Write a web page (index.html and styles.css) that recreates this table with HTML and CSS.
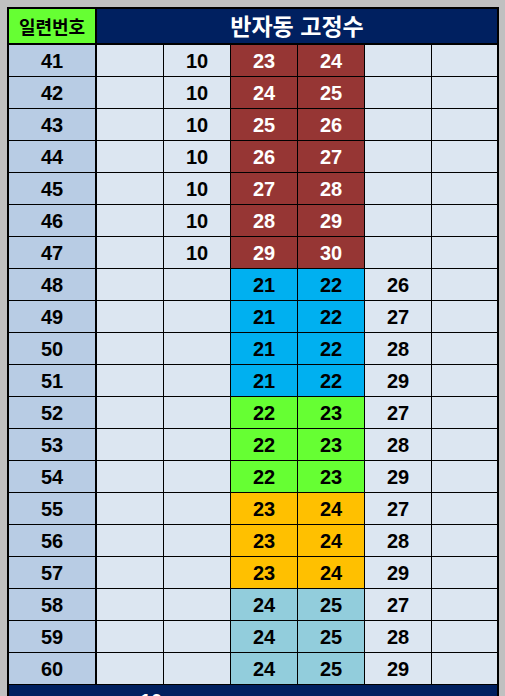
FILE: index.html
```html
<!DOCTYPE html>
<html lang="ko">
<head>
<meta charset="utf-8">
<link rel="stylesheet" href="styles.css">
</head>
<body>
<div class="sheet">
  <div class="c idh">일련번호</div>
  <div class="c title">반자동 고정수</div>

  <div class="c id">41</div><div class="c e"></div><div class="c e">10</div><div class="c m">23</div><div class="c m">24</div><div class="c e"></div><div class="c e"></div>
  <div class="c id">42</div><div class="c e"></div><div class="c e">10</div><div class="c m">24</div><div class="c m">25</div><div class="c e"></div><div class="c e"></div>
  <div class="c id">43</div><div class="c e"></div><div class="c e">10</div><div class="c m">25</div><div class="c m">26</div><div class="c e"></div><div class="c e"></div>
  <div class="c id">44</div><div class="c e"></div><div class="c e">10</div><div class="c m">26</div><div class="c m">27</div><div class="c e"></div><div class="c e"></div>
  <div class="c id">45</div><div class="c e"></div><div class="c e">10</div><div class="c m">27</div><div class="c m">28</div><div class="c e"></div><div class="c e"></div>
  <div class="c id">46</div><div class="c e"></div><div class="c e">10</div><div class="c m">28</div><div class="c m">29</div><div class="c e"></div><div class="c e"></div>
  <div class="c id">47</div><div class="c e"></div><div class="c e">10</div><div class="c m">29</div><div class="c m">30</div><div class="c e"></div><div class="c e"></div>

  <div class="c id">48</div><div class="c e"></div><div class="c e"></div><div class="c b">21</div><div class="c b">22</div><div class="c e">26</div><div class="c e"></div>
  <div class="c id">49</div><div class="c e"></div><div class="c e"></div><div class="c b">21</div><div class="c b">22</div><div class="c e">27</div><div class="c e"></div>
  <div class="c id">50</div><div class="c e"></div><div class="c e"></div><div class="c b">21</div><div class="c b">22</div><div class="c e">28</div><div class="c e"></div>
  <div class="c id">51</div><div class="c e"></div><div class="c e"></div><div class="c b">21</div><div class="c b">22</div><div class="c e">29</div><div class="c e"></div>

  <div class="c id">52</div><div class="c e"></div><div class="c e"></div><div class="c g">22</div><div class="c g">23</div><div class="c e">27</div><div class="c e"></div>
  <div class="c id">53</div><div class="c e"></div><div class="c e"></div><div class="c g">22</div><div class="c g">23</div><div class="c e">28</div><div class="c e"></div>
  <div class="c id">54</div><div class="c e"></div><div class="c e"></div><div class="c g">22</div><div class="c g">23</div><div class="c e">29</div><div class="c e"></div>

  <div class="c id">55</div><div class="c e"></div><div class="c e"></div><div class="c o">23</div><div class="c o">24</div><div class="c e">27</div><div class="c e"></div>
  <div class="c id">56</div><div class="c e"></div><div class="c e"></div><div class="c o">23</div><div class="c o">24</div><div class="c e">28</div><div class="c e"></div>
  <div class="c id">57</div><div class="c e"></div><div class="c e"></div><div class="c o">23</div><div class="c o">24</div><div class="c e">29</div><div class="c e"></div>

  <div class="c id">58</div><div class="c e"></div><div class="c e"></div><div class="c t">24</div><div class="c t">25</div><div class="c e">27</div><div class="c e"></div>
  <div class="c id">59</div><div class="c e"></div><div class="c e"></div><div class="c t">24</div><div class="c t">25</div><div class="c e">28</div><div class="c e"></div>
  <div class="c id">60</div><div class="c e"></div><div class="c e"></div><div class="c t">24</div><div class="c t">25</div><div class="c e">29</div><div class="c e"></div>

  <div class="c foot">10</div>
</div>
</body>
</html>
```

FILE: styles.css
```css
html, body {
  margin: 0;
  padding: 0;
  height: 696px;
  overflow: hidden;
  background: #c0c0c0;
}

.sheet {
  margin: 7px 0 0 7px;
  width: 488px;
  padding: 2px;
  background: #000;
  display: grid;
  grid-template-columns: 87px repeat(5, 66px) 65px;
  grid-template-rows: 35px repeat(20, 31px) 31px;
  gap: 1px;
  font-family: "Liberation Sans", "Noto Sans CJK KR", sans-serif;
  font-weight: 700;
  font-size: 20px;
  color: #000;
}

.c {
  display: flex;
  align-items: center;
  justify-content: center;
  box-sizing: border-box;
  line-height: 1;
}

.idh {
  background: #66ff33;
  font-family: "Noto Sans CJK KR", sans-serif;
  font-size: 18px;
  border-right: 1px solid #000;
  border-bottom: 1px solid #000;
  padding-bottom: 1px;
}

.title {
  grid-column: 2 / span 6;
  background: #002060;
  color: #fff;
  font-family: "Noto Sans CJK KR", sans-serif;
  font-size: 23px;
  border-bottom: 1px solid #000;
  padding-bottom: 1px;
}

.id {
  background: #b8cce4;
  border-right: 1px solid #000;
}

.e { background: #dce6f1; }
.m { background: #963634; color: #fff; }
.b { background: #00b0f0; }
.g { background: #66ff33; }
.o { background: #ffc000; }
.t { background: #92cddc; }

.foot {
  grid-column: 1 / span 7;
  background: #002060;
  color: #fff;
  justify-content: flex-start;
  padding-left: 131px;
}
```
